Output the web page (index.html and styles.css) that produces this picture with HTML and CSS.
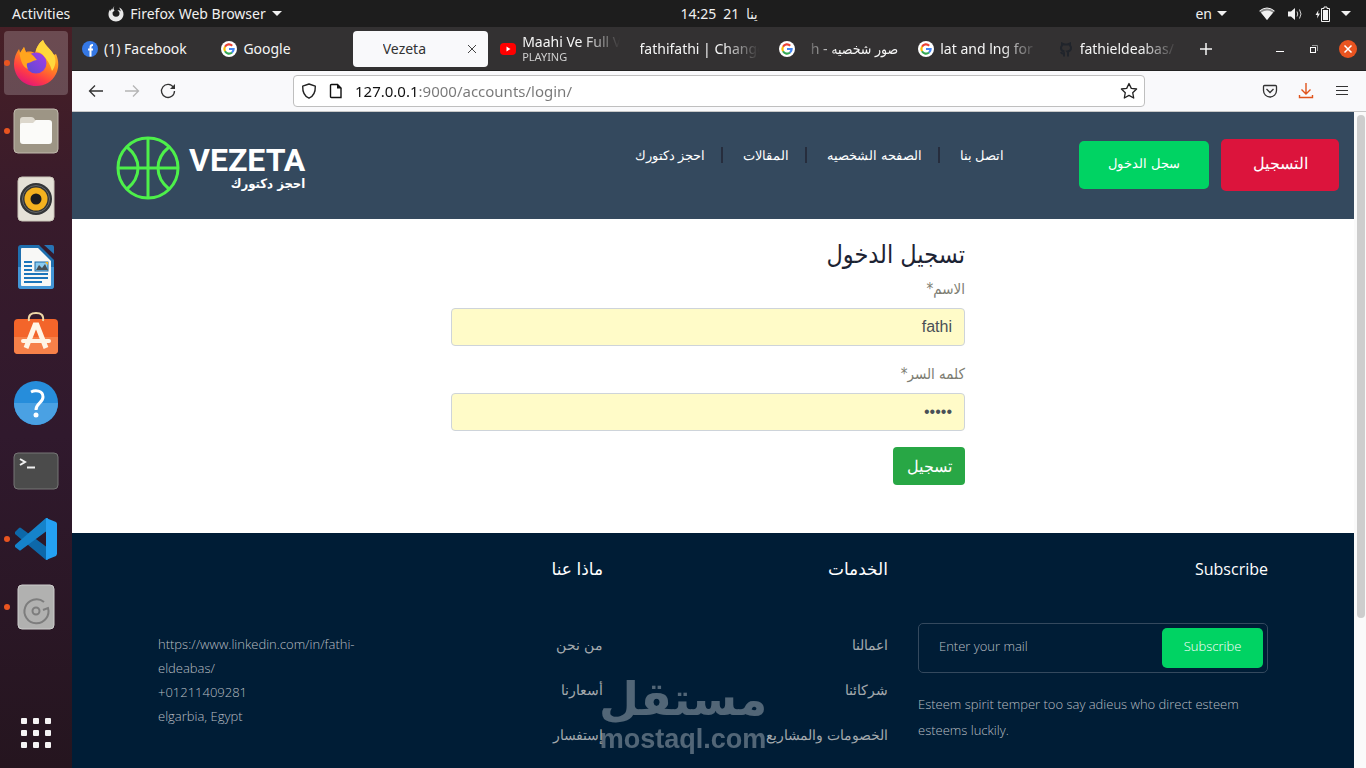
FILE: index.html
```html
<!DOCTYPE html>
<html lang="en">
<head>
    <meta charset="UTF-8">
    <meta name="viewport" content="width=device-width, initial-scale=1.0">
    <title>Vezeta</title>
    <link rel="stylesheet" href="styles.css">
</head>
<body>
    <!-- shared icons -->
    <svg class="defs" width="0" height="0" aria-hidden="true">
        <symbol id="google" viewBox="0 0 16 16">
            <circle cx="8" cy="8" r="8" fill="#fff"/>
            <g fill="none" stroke-width="2.2">
                <path d="M4 5.7A4.6 4.6 0 0 1 11.2 4.7" stroke="#ea4335"/>
                <path d="M4 10.3A4.6 4.6 0 0 1 4 5.7" stroke="#fbbc05"/>
                <path d="M11 11.5A4.6 4.6 0 0 1 4 10.3" stroke="#34a853"/>
                <path d="M8 8H12.6A4.6 4.6 0 0 1 11 11.5" stroke="#4285f4"/>
            </g>
        </symbol>
    </svg>

    <div class="topbar">
        <div class="topbar-left">
            <button>Activities</button>
            <button class="app-menu">
                <svg width="16" height="16" viewBox="0 0 16 16"><path d="M6.500 0C5 1.500 5.500 3 6.500 4.500L4.500 6.500C4.300 9.500 6 10.800 8 10.800C10.300 10.800 11.800 9 11.500 7C11.200 5.500 10.500 5 9.500 4.500C11 4 12 4.500 12.800 5.500C12.800 4.500 12 3 11 1.500C14 2.500 15.700 5.500 15.500 8.500C15.200 12.500 12 15.500 8 15.500S.5 12.500.5 8.500C.5 6.500 1 5 2 3.500L2.500 5L4 2.500L4.500 4C4.500 2.500 5 1.200 6.500 0z" fill="#e8e8e8"/></svg>
                Firefox Web Browser
                <span class="caret"></span>
            </button>
        </div>
        <button class="clock"><span>14:25</span><span>21</span><span lang="ar">ينا</span></button>
        <div class="topbar-right">
            <button class="lang-menu">en <span class="caret"></span></button>
            <button class="tray" aria-label="System">
                <svg width="16" height="16" viewBox="0 0 16 16"><path d="M.5 5Q8-1 15.500 5L8 14z" fill="#8b8b8b"/><path d="M2 6.500Q8 2.500 14 6.500L8 14z" fill="#f2f2f2"/><path d="M.5 5Q8-1 15.500 5" fill="none" stroke="#f2f2f2"/></svg>
                <svg width="16" height="16" viewBox="0 0 16 16"><path d="M1 5.500H4L8 2V14L4 10.500H1z" fill="#f2f2f2"/><path d="M10 5.500Q11.500 8 10 10.500M12.500 3.500Q15.500 8 12.500 12.500" fill="none" stroke="#d0d0d0"/></svg>
                <svg width="16" height="16" viewBox="0 0 16 16"><path d="M3.500 4L.5 9H2.500L2 12.500L5 7.500H3z" fill="#f2f2f2"/><path d="M6.500 2.500H9V1H12V2.500H14.500V15.500H6.500z" fill="none" stroke="#f2f2f2"/><path d="M8 4H13V14H8z" fill="#f2f2f2"/></svg>
                <span class="caret"></span>
            </button>
        </div>
    </div>

    <div class="desktop">
        <nav class="dock" aria-label="Dock">
            <button class="running active" aria-label="Firefox">
                <svg width="46" height="48" viewBox="0 0 46 48">
                    <defs>
                        <linearGradient id="fox" x1=".8" y1="0" x2=".3" y2="1"><stop offset="0" stop-color="#ffd93b"/><stop offset=".45" stop-color="#ff8a1e"/><stop offset=".75" stop-color="#ff3d44"/><stop offset="1" stop-color="#e0157a"/></linearGradient>
                        <linearGradient id="globe" x1="0" y1="1" x2="1" y2="0"><stop offset="0" stop-color="#5a4ad0"/><stop offset="1" stop-color="#a53de8"/></linearGradient>
                    </defs>
                    <path d="M30 1C32 7 38 10 41 16L43 15C46 22 46 29 43 35C39 43 32 47 23 47C10 47 1 37 1 25C1 19 3 14 6 10L7 14L11 8L13 13C17 12 20 13 22 14C23 9 26 4 30 1z" fill="url(#fox)"/>
                    <circle cx="23" cy="24" r="10.500" fill="url(#globe)"/>
                    <path d="M6 10L7 14L11 8L13 14C17 13 20 16 24 21C20 21 18 24 15 24C13 24 14 28 15 30C9 28 7 20 6 10z" fill="#ffa51e"/>
                    <path d="M30 1C32 7 38 10 41 16C44 22 42 28 39 32C37 25 34 20 29 15C26 13 24 12 23 13C23 9 26 4 30 1z" fill="#ffd83d"/>
                </svg>
            </button>
            <button class="running" aria-label="Files">
                <svg width="46" height="46" viewBox="0 0 46 46"><rect x="1" y="1" width="44" height="44" rx="4" fill="#9d9585" stroke="#c0b9ad"/><path d="M7 12Q7 9 10 9H18Q21 9 22 12H36V20H7z" fill="#dcd7cc"/><path d="M9 15H20L23 12H36Q39 12 39 15V33Q39 36 36 36H10Q7 36 7 33V17Q7 15 9 15z" fill="#fbfbf9"/></svg>
            </button>
            <button aria-label="Rhythmbox">
                <svg width="38" height="46" viewBox="0 0 38 46"><rect x="1" y="1" width="36" height="44" rx="4" fill="#e5e1d7" stroke="#c9c4b8"/><circle cx="19" cy="23" r="16" fill="#333537"/><circle cx="19" cy="23" r="13.500" fill="none" stroke="#66686a"/><circle cx="19" cy="23" r="11.500" fill="#f4b21f"/><circle cx="19" cy="23" r="5.500" fill="#1c1d1f"/></svg>
            </button>
            <button aria-label="LibreOffice Writer">
                <svg width="38" height="46" viewBox="0 0 38 46"><path d="M4 1H22L37 16V42Q37 45 34 45H4Q1 45 1 42V4Q1 1 4 1z" fill="#1f6fae"/><path d="M1 23H37V42Q37 45 34 45H4Q1 45 1 42z" fill="#4295d6"/><path d="M27 1H35Q37 1 37 3V10z" fill="#2774b5"/><path d="M4 5Q4 4 5 4H21L34 17V41Q34 42 33 42H5Q4 42 4 41z" fill="#f8f8f6"/><path d="M7 18H15M7 22H15M7 26H15M7 30H31M7 34H31M7 38H25" stroke="#1b75bb" stroke-width="2"/><rect x="18" y="18" width="13" height="9" fill="#8acbf0" stroke="#1b6aa8"/><path d="M19 26L22 21L25 24L28 20L31 26z" fill="#475158"/><path d="M28 18H31V21z" fill="#f6b21d"/></svg>
            </button>
            <button aria-label="Ubuntu Software">
                <svg width="46" height="48" viewBox="0 0 46 48"><rect x="1" y="8" width="44" height="35" rx="4" fill="#f3652a"/><path d="M1 26H45V39Q45 43 41 43H5Q1 43 1 39z" fill="#f68149"/><path d="M16 10C15 4 18 2 23 2S31 4 30 10" fill="none" stroke="#efd8a7" stroke-width="2"/><path d="M13 37L22 14H24L33 37" fill="none" stroke="#fff5e5" stroke-width="5"/><path d="M10 30H36" stroke="#fff5e5" stroke-width="4" stroke-linecap="round"/></svg>
            </button>
            <button aria-label="Help">
                <svg width="46" height="46" viewBox="0 0 46 46"><circle cx="23" cy="23" r="22" fill="#268ddb"/><path d="M1 23A22 22 0 0 0 45 23z" fill="#4aa1e3"/><path d="M18 12C22 10 30 10 30 17C30 23 23 23 23 30" fill="none" stroke="#fff" stroke-width="3"/><circle cx="23" cy="35" r="2.500" fill="#fff"/></svg>
            </button>
            <button aria-label="Terminal">
                <svg width="46" height="38" viewBox="0 0 46 38"><rect x="1" y="1" width="44" height="36" rx="4" fill="#4b4b4b" stroke="#767676"/><path d="M7 7L12 10L7 13M14 15.500H22" fill="none" stroke="#f0f0f0" stroke-width="2"/></svg>
            </button>
            <button class="running" aria-label="Visual Studio Code">
                <svg width="44" height="44" viewBox="0 0 44 44"><path d="M1 15L5 11Q6 10 7 11L34 31V43H32L1 17z" fill="#0d68a9"/><path d="M1 28L32 1H34V13L7 33Q6 34 5 33L1 30z" fill="#1583cb"/><path d="M32 1L42 5Q43 6 43 7V37L42 39L32 43z" fill="#24a0f2"/></svg>
            </button>
            <button class="running" aria-label="Disks">
                <svg width="38" height="46" viewBox="0 0 38 46"><rect x="1" y="1" width="36" height="44" rx="4" fill="#b1b1b0" stroke="#cdcdcc"/><path d="M27 18A12 12 0 1 0 31 24L26 26" fill="none" stroke="#7d7d7d" stroke-width="2"/><circle cx="19" cy="27" r="3.500" fill="none" stroke="#7d7d7d" stroke-width="2"/></svg>
            </button>
            <button class="show-apps" aria-label="Show Applications">
                <svg width="30" height="30" viewBox="0 0 30 30" fill="#f5f3f4"><rect width="6" height="6" rx="1"/><rect x="12" width="6" height="6" rx="1"/><rect x="24" width="6" height="6" rx="1"/><rect y="12" width="6" height="6" rx="1"/><rect x="12" y="12" width="6" height="6" rx="1"/><rect x="24" y="12" width="6" height="6" rx="1"/><rect y="24" width="6" height="6" rx="1"/><rect x="12" y="24" width="6" height="6" rx="1"/><rect x="24" y="24" width="6" height="6" rx="1"/></svg>
            </button>
        </nav>

        <div class="browser">
            <div class="tabbar">
                <div class="tabs">
                    <button class="tab">
                        <svg width="16" height="16" viewBox="0 0 16 16"><circle cx="8" cy="8" r="8" fill="#3578e5"/><path d="M8.500 15.500V9.500M6 8.500H11M8.500 9.500V6Q8.500 4 11 4" fill="none" stroke="#fff" stroke-width="2"/></svg>
                        <span class="tab-title">(1) Facebook</span>
                    </button>
                    <button class="tab">
                        <svg width="16" height="16"><use href="#google"/></svg>
                        <span class="tab-title">Google</span>
                    </button>
                    <button class="tab current">
                        <span class="tab-blank"></span>
                        <span class="tab-title">Vezeta</span>
                        <svg width="16" height="16" viewBox="0 0 16 16"><path d="M4 4L12 12M12 4L4 12" stroke="#444"/></svg>
                    </button>
                    <button class="tab playing">
                        <svg width="16" height="16" viewBox="0 0 16 16"><rect y="2" width="16" height="12" rx="4" fill="#f00"/><path d="M6.500 5.500L10.500 8L6.500 10.500z" fill="#fff"/></svg>
                        <span class="tab-title fade">Maahi Ve Full V<small>PLAYING</small></span>
                    </button>
                    <button class="tab">
                        <span class="tab-title fade">fathifathi | Change</span>
                    </button>
                    <button class="tab">
                        <svg width="16" height="16"><use href="#google"/></svg>
                        <span class="tab-title fade-rtl" dir="rtl" lang="ar">صور شخصيه - h</span>
                    </button>
                    <button class="tab">
                        <svg width="16" height="16"><use href="#google"/></svg>
                        <span class="tab-title fade">lat and lng for</span>
                    </button>
                    <button class="tab">
                        <svg width="16" height="16" viewBox="0 0 16 16"><path d="M6 15.500V12.500Q3.500 13 3 11M10 15.500V12Q10 11 9.500 10.500Q13 10 13 7Q13 5.500 12 4.500L12 2.500L9.500 3.500H6.500L4 2.500V4.500Q3 5.500 3 7Q3 10 6.500 10.500" fill="none" stroke="#20242b" stroke-width="2"/></svg>
                        <span class="tab-title fade">fathieldeabas/</span>
                    </button>
                </div>
                <button class="new-tab" aria-label="New tab"><svg width="16" height="16" viewBox="0 0 16 16"><path d="M8 2V14M2 8H14" stroke="#f5f5f5" stroke-width="1.500"/></svg></button>
                <div class="window-buttons">
                    <button aria-label="Minimize"><svg width="18" height="18" viewBox="0 0 18 18"><path d="M5 11.500H13" stroke="#fff"/></svg></button>
                    <button aria-label="Restore"><svg width="18" height="18" viewBox="0 0 18 18"><path d="M7 5.500H12.500V11" fill="none" stroke="#999"/><rect x="5.500" y="7.500" width="5" height="5" fill="none" stroke="#fff"/></svg></button>
                    <button aria-label="Close"><svg width="18" height="18" viewBox="0 0 18 18"><circle cx="9" cy="9" r="9" fill="#e95420"/><path d="M5.500 5.500L12.500 12.500M12.500 5.500L5.500 12.500" stroke="#fff" stroke-width="1.500"/></svg></button>
                </div>
            </div>

            <div class="toolbar">
                <div class="nav-buttons">
                    <button aria-label="Back"><svg width="16" height="16" viewBox="0 0 16 16"><path d="M15 8H2M7 2.500L1.500 8L7 13.500" fill="none" stroke="#333" stroke-width="1.300"/></svg></button>
                    <button aria-label="Forward"><svg width="16" height="16" viewBox="0 0 16 16"><path d="M1 8H14M9 2.500L14.500 8L9 13.500" fill="none" stroke="#b5b5b5" stroke-width="1.300"/></svg></button>
                    <button aria-label="Reload"><svg width="16" height="16" viewBox="0 0 16 16"><path d="M13.500 4.500A6.500 6.500 0 1 0 14.500 8" fill="none" stroke="#333" stroke-width="1.300"/><path d="M15 1V6H10z" fill="#333"/></svg></button>
                </div>
                <div class="urlbar">
                    <svg width="16" height="16" viewBox="0 0 16 16"><path d="M8 1L14.300 3.200C14.500 9 13 13 8 15.200C3 13 1.500 9 1.700 3.200z" fill="none" stroke="#222" stroke-width="1.400" stroke-linejoin="round"/></svg>
                    <svg width="16" height="16" viewBox="0 0 16 16"><path d="M3.500 1.500H9.500L13 5V14.500H3.500Q2.500 14.500 2.500 13.500V2.500Q2.500 1.500 3.500 1.500z" fill="none" stroke="#111" stroke-width="1.400"/><path d="M9 1V5.500H13.500z" fill="#111"/></svg>
                    <input type="text" class="url" value="127.0.0.1:9000/accounts/login/" aria-label="Address">
                    <svg width="18" height="18" viewBox="0 0 18 18"><path d="M9 1.500L11.300 6.400L16.600 7L12.700 10.700L13.700 16L9 13.400L4.300 16L5.300 10.700L1.400 7L6.700 6.400z" fill="none" stroke="#222" stroke-width="1.300" stroke-linejoin="round"/></svg>
                </div>
                <div class="tool-buttons">
                    <button aria-label="Pocket"><svg width="16" height="16" viewBox="0 0 16 16"><path d="M2.500 2.500H13.500Q14.500 2.500 14.500 3.500V7.500A6.500 6.500 0 0 1 1.500 7.500V3.500Q1.500 2.500 2.500 2.500z" fill="none" stroke="#333" stroke-width="1.300"/><path d="M4.500 6L8 9.500L11.500 6" fill="none" stroke="#333" stroke-width="1.300"/></svg></button>
                    <button aria-label="Downloads"><svg width="16" height="16" viewBox="0 0 16 16"><path d="M8 0V11M3.500 6.500L8 11L12.500 6.500M1.500 12V14.500H14.500V12" fill="none" stroke="#e0541c" stroke-width="1.400"/></svg></button>
                    <button aria-label="Menu"><svg width="16" height="16" viewBox="0 0 16 16"><path d="M2 3.500H14M2 7.500H14M2 11.500H14" stroke="#333"/></svg></button>
                </div>
            </div>

            <div class="viewport">
                <div class="page">
                    <header class="site-header">
                        <a class="logo" href="#">
                            <svg width="64" height="64" viewBox="0 0 64 64" fill="none" stroke="#4df04a" stroke-width="3"><circle cx="32" cy="32" r="30"/><path d="M32 2V62M2 32H62M11 11Q22 20 22 32T11 53M53 11Q42 20 42 32T53 53"/></svg>
                            <span class="logo-text">VEZETA<small lang="ar" dir="rtl">احجز دكتورك</small></span>
                        </a>
                        <nav class="site-nav" lang="ar">
                            <a href="#">احجز دكتورك</a>
                            <a href="#">المقالات</a>
                            <a href="#">الصفحه الشخصيه</a>
                            <a href="#">اتصل بنا</a>
                        </nav>
                        <div class="site-actions" lang="ar">
                            <button class="btn-login">سجل الدخول</button>
                            <button class="btn-register">التسجيل</button>
                        </div>
                    </header>

                    <main>
                        <form class="login" lang="ar" dir="rtl">
                            <h1>تسجيل الدخول</h1>
                            <label for="username">الاسم*</label>
                            <input type="text" id="username" value="fathi">
                            <label for="password">كلمه السر*</label>
                            <input type="password" id="password" value="12345">
                            <button type="submit">تسجيل</button>
                        </form>
                    </main>

                    <footer>
                        <div class="footer-grid">
                            <address>
                                https://www.linkedin.com/in/fathi-eldeabas/<br>
                                +01211409281<br>
                                elgarbia, Egypt
                            </address>
                            <div class="links" lang="ar" dir="rtl">
                                <h2>ماذا عنا</h2>
                                <a href="#">من نحن</a>
                                <a href="#">أسعارنا</a>
                                <a href="#">إستفسار</a>
                            </div>
                            <div class="links" lang="ar" dir="rtl">
                                <h2>الخدمات</h2>
                                <a href="#">اعمالنا</a>
                                <a href="#">شركائنا</a>
                                <a href="#">الخصومات والمشاريع</a>
                            </div>
                            <div class="subscribe">
                                <h2>Subscribe</h2>
                                <form class="mail-box">
                                    <input type="email" placeholder="Enter your mail" aria-label="Enter your mail">
                                    <button type="button">Subscribe</button>
                                </form>
                                <p>Esteem spirit temper too say adieus who direct esteem esteems luckily.</p>
                            </div>
                        </div>
                    </footer>
                </div>
                <div class="scrollbar"><div class="thumb"></div></div>
            </div>
        </div>
    </div>

    <div class="watermark"><span lang="ar">مستقل</span><b>mostaql.com</b></div>
</body>
</html>
```
FILE: styles.css
```css
* {
    box-sizing: border-box;
}
body {
    margin: 0;
    height: 100vh;
    display: flex;
    flex-direction: column;
    overflow: hidden;
    font-family: "Noto Sans", "DejaVu Sans Condensed", "DejaVu Sans", sans-serif;
    font-size: 14px;
}
button {
    margin: 0;
    padding: 0;
    border: 0;
    background: none;
    color: inherit;
    font: inherit;
    cursor: pointer;
}
svg {
    display: block;
    flex: none;
}
a {
    color: inherit;
    text-decoration: none;
}
.defs {
    position: absolute;
}

/* gnome top bar */
.topbar {
    flex: none;
    height: 27px;
    display: grid;
    grid-template-columns: 1fr auto 1fr;
    align-items: center;
    padding: 0 15px 0 12px;
    background: #1d1d1d;
    color: #f0f0f0;
    font-size: 14px;
    line-height: 26px;
}
.topbar-left, .topbar-right, .topbar button {
    display: flex;
    align-items: center;
}
.topbar-left {
    gap: 38px;
}
.topbar .app-menu {
    gap: 6px;
}
.topbar .clock {
    gap: 7px;
    padding-left: 74px;
    width: 150px;
}
.topbar-right {
    justify-content: flex-end;
    gap: 32px;
}
.topbar .lang-menu {
    gap: 5px;
}
.topbar .tray {
    gap: 12px;
}
.caret {
    border: 5px solid transparent;
    border-top-color: #f0f0f0;
    border-bottom: 0;
}
.tray .caret {
    margin-left: -2px;
}

/* dock */
.desktop {
    flex: 1;
    min-height: 0;
    display: flex;
}
.dock {
    flex: none;
    width: 72px;
    padding: 4px 4px 3px;
    display: flex;
    flex-direction: column;
    gap: 4px;
    background: linear-gradient(#471f26, #381b2b 25%, #30192d 55%, #25151f);
}
.dock button {
    position: relative;
    height: 64px;
    border-radius: 4px;
    display: flex;
    align-items: center;
    justify-content: center;
}
.dock .active {
    background: rgba(255, 255, 255, 0.2);
}
.dock .running::before {
    content: "";
    position: absolute;
    left: 0;
    top: 29px;
    width: 6px;
    height: 6px;
    border-radius: 50%;
    background: #e95420;
}
.dock .show-apps {
    margin-top: auto;
}

/* browser */
.browser {
    flex: 1;
    min-width: 0;
    display: flex;
    flex-direction: column;
}
.tabbar {
    flex: none;
    height: 44px;
    padding: 4px 9px 4px 2px;
    display: flex;
    align-items: center;
    background: #333132;
    border-bottom: 1px solid #222;
    color: #f5f5f5;
}
.tabs {
    flex: 1;
    min-width: 0;
    display: flex;
    gap: 4px;
}
.tab {
    flex: 1;
    min-width: 0;
    height: 36px;
    padding: 0 8px;
    border-radius: 4px;
    display: flex;
    align-items: center;
    gap: 6px;
}
.tab-title {
    flex: 1;
    min-width: 0;
    overflow: hidden;
    white-space: nowrap;
    text-align: left;
}
.tab-title small {
    display: block;
    font-size: 11px;
    line-height: 14px;
    color: #d0d0d0;
}
.playing {
    line-height: 16px;
}
.current {
    background: #f9f9fb;
    color: #333;
}
.tab-blank {
    width: 16px;
}
.fade {
    mask-image: linear-gradient(to left, transparent, #000 36px);
}
.fade-rtl {
    text-align: right;
    mask-image: linear-gradient(to right, transparent, #000 36px);
}
.new-tab {
    padding: 0 10px 0 13px;
}
.window-buttons {
    display: flex;
    gap: 16px;
    margin-left: 47px;
}
.toolbar {
    flex: none;
    height: 41px;
    padding: 0 16px;
    display: flex;
    align-items: center;
    background: #f9f9fb;
    border-bottom: 1px solid #c8c8c8;
}
.nav-buttons, .tool-buttons {
    display: flex;
    gap: 20px;
}
.urlbar {
    flex: 1;
    height: 32px;
    margin: 0 117px;
    padding: 0 6px 0 7px;
    display: flex;
    align-items: center;
    gap: 11px;
    background: #fff;
    border: 1px solid #bfbfbf;
    border-radius: 4px;
}
/* host in black, the rest of the address in grey */
.url {
    flex: 1;
    min-width: 0;
    padding: 0;
    border: 0;
    outline: 0;
    font: inherit;
    font-size: 15px;
    color: transparent;
    background: linear-gradient(to right, #111 63px, #777 63px);
    -webkit-background-clip: text;
    background-clip: text;
}
.viewport {
    flex: 1;
    min-height: 0;
    display: flex;
}
.scrollbar {
    flex: none;
    width: 12px;
    padding: 3px 1px 0 3px;
    background: #fafafa;
}
.thumb {
    height: 77%;
    border-radius: 4px;
    background: #cdcdcd;
}

/* site */
.page {
    flex: 1;
    min-width: 0;
    overflow: hidden;
    background: #fff;
    font-family: "Open Sans", "DejaVu Sans", sans-serif;
    font-size: 13px;
    font-weight: 300;
}
.site-header {
    height: 107px;
    padding: 0 15px 2px 44px;
    display: flex;
    align-items: center;
    background: #34495e;
    color: #fff;
}
.logo {
    display: flex;
    align-items: center;
    gap: 9px;
    padding-top: 6px;
}
.logo-text {
    display: flex;
    flex-direction: column;
    font-family: Roboto, sans-serif;
    font-size: 32px;
    font-weight: bold;
    line-height: 32px;
}
.logo-text small {
    font-family: "DejaVu Sans Condensed", sans-serif;
    font-size: 13px;
    font-weight: bold;
    line-height: 16px;
}
.site-nav {
    display: flex;
    margin-left: auto;
    padding-bottom: 20px;
    line-height: 16px;
}
.site-nav a + a {
    margin-left: 16px;
    padding-left: 20px;
    border-left: 2px solid #262d3d;
}
.site-actions {
    display: flex;
    align-items: center;
    gap: 12px;
    margin-left: 75px;
}
.site-actions button {
    padding: 0 24px 4px;
    border-radius: 5px;
}
.btn-login {
    min-width: 130px;
    height: 48px;
    background: #00d363;
}
.site-actions .btn-register {
    min-width: 118px;
    height: 52px;
    background: #dc143c;
    font-size: 16px;
}
main {
    padding: 20px 10px 48px 0;
}
.login {
    max-width: 514px;
    margin: 0 auto;
    font-family: "DejaVu Sans Condensed", "DejaVu Sans", sans-serif;
}
.login h1 {
    margin: 0;
    font-size: 25px;
    font-weight: normal;
    line-height: 32px;
    color: #1c2333;
}
.login label {
    display: block;
    font-size: 15px;
    line-height: 21px;
    margin: 8px 0;
    color: #7d7d72;
}
.login input {
    display: block;
    width: 100%;
    height: 38px;
    margin-bottom: 16px;
    padding: 6px 12px;
    border: 1px solid #ced4da;
    border-radius: 4px;
    background: #fffbc8;
    color: #495057;
    font-family: "Liberation Sans", sans-serif;
    font-size: 16px;
}
.login input + label {
    margin-top: 18px;
}
.login button {
    display: block;
    height: 38px;
    min-width: 72px;
    padding: 0 12px;
    border-radius: 4px;
    background: #28a745;
    color: #fff;
    font-family: "DejaVu Sans", sans-serif;
    font-size: 16px;
}
footer {
    min-height: 300px;
    background: #001d36;
    color: #b9bec2;
}
.footer-grid {
    max-width: 1140px;
    margin: 0 auto;
    display: grid;
    grid-template-columns: 3fr 2fr 3fr 4fr;
}
.footer-grid > * {
    padding: 24px 15px;
}
.footer-grid address {
    padding: 99px 40px 0 15px;
    font-style: normal;
    line-height: 24px;
}
.footer-grid h2 {
    margin: 0 0 42px;
    font-size: 16px;
    font-weight: normal;
    line-height: 24px;
    color: #fff;
}
.links a {
    display: block;
    margin-bottom: 21px;
    font-size: 14px;
    line-height: 24px;
    white-space: nowrap;
    color: #a3a9ad;
}
.footer-grid .links h2 {
    margin-bottom: 52px;
    font-size: 17px;
}
.subscribe h2 {
    text-align: right;
}
.mail-box {
    display: flex;
    height: 50px;
    padding: 4px;
    border: 1px solid #34495e;
    border-radius: 5px;
}
.mail-box input {
    flex: 1;
    min-width: 0;
    padding: 0 16px 4px;
    border: 0;
    outline: 0;
    background: none;
    color: #b9bec2;
    font: inherit;
}
.mail-box input::placeholder {
    color: #b9bec2;
}
.mail-box button {
    width: 101px;
    padding-bottom: 4px;
    border-radius: 5px;
    background: #00d363;
    color: #fff;
}
.subscribe p {
    margin: 18px 0 0;
    line-height: 26px;
}

/* watermark over the bottom of the page */
.watermark {
    position: absolute;
    left: 50%;
    bottom: 13px;
    transform: translateX(-50%);
    display: flex;
    flex-direction: column;
    align-items: center;
    color: #fff;
    opacity: 0.32;
    pointer-events: none;
}
.watermark span {
    font-family: "DejaVu Sans", sans-serif;
    font-weight: bold;
    font-size: 46px;
    line-height: 48px;
}
.watermark b {
    font-family: "Liberation Sans", sans-serif;
    font-size: 27px;
    line-height: 32px;
}
```
